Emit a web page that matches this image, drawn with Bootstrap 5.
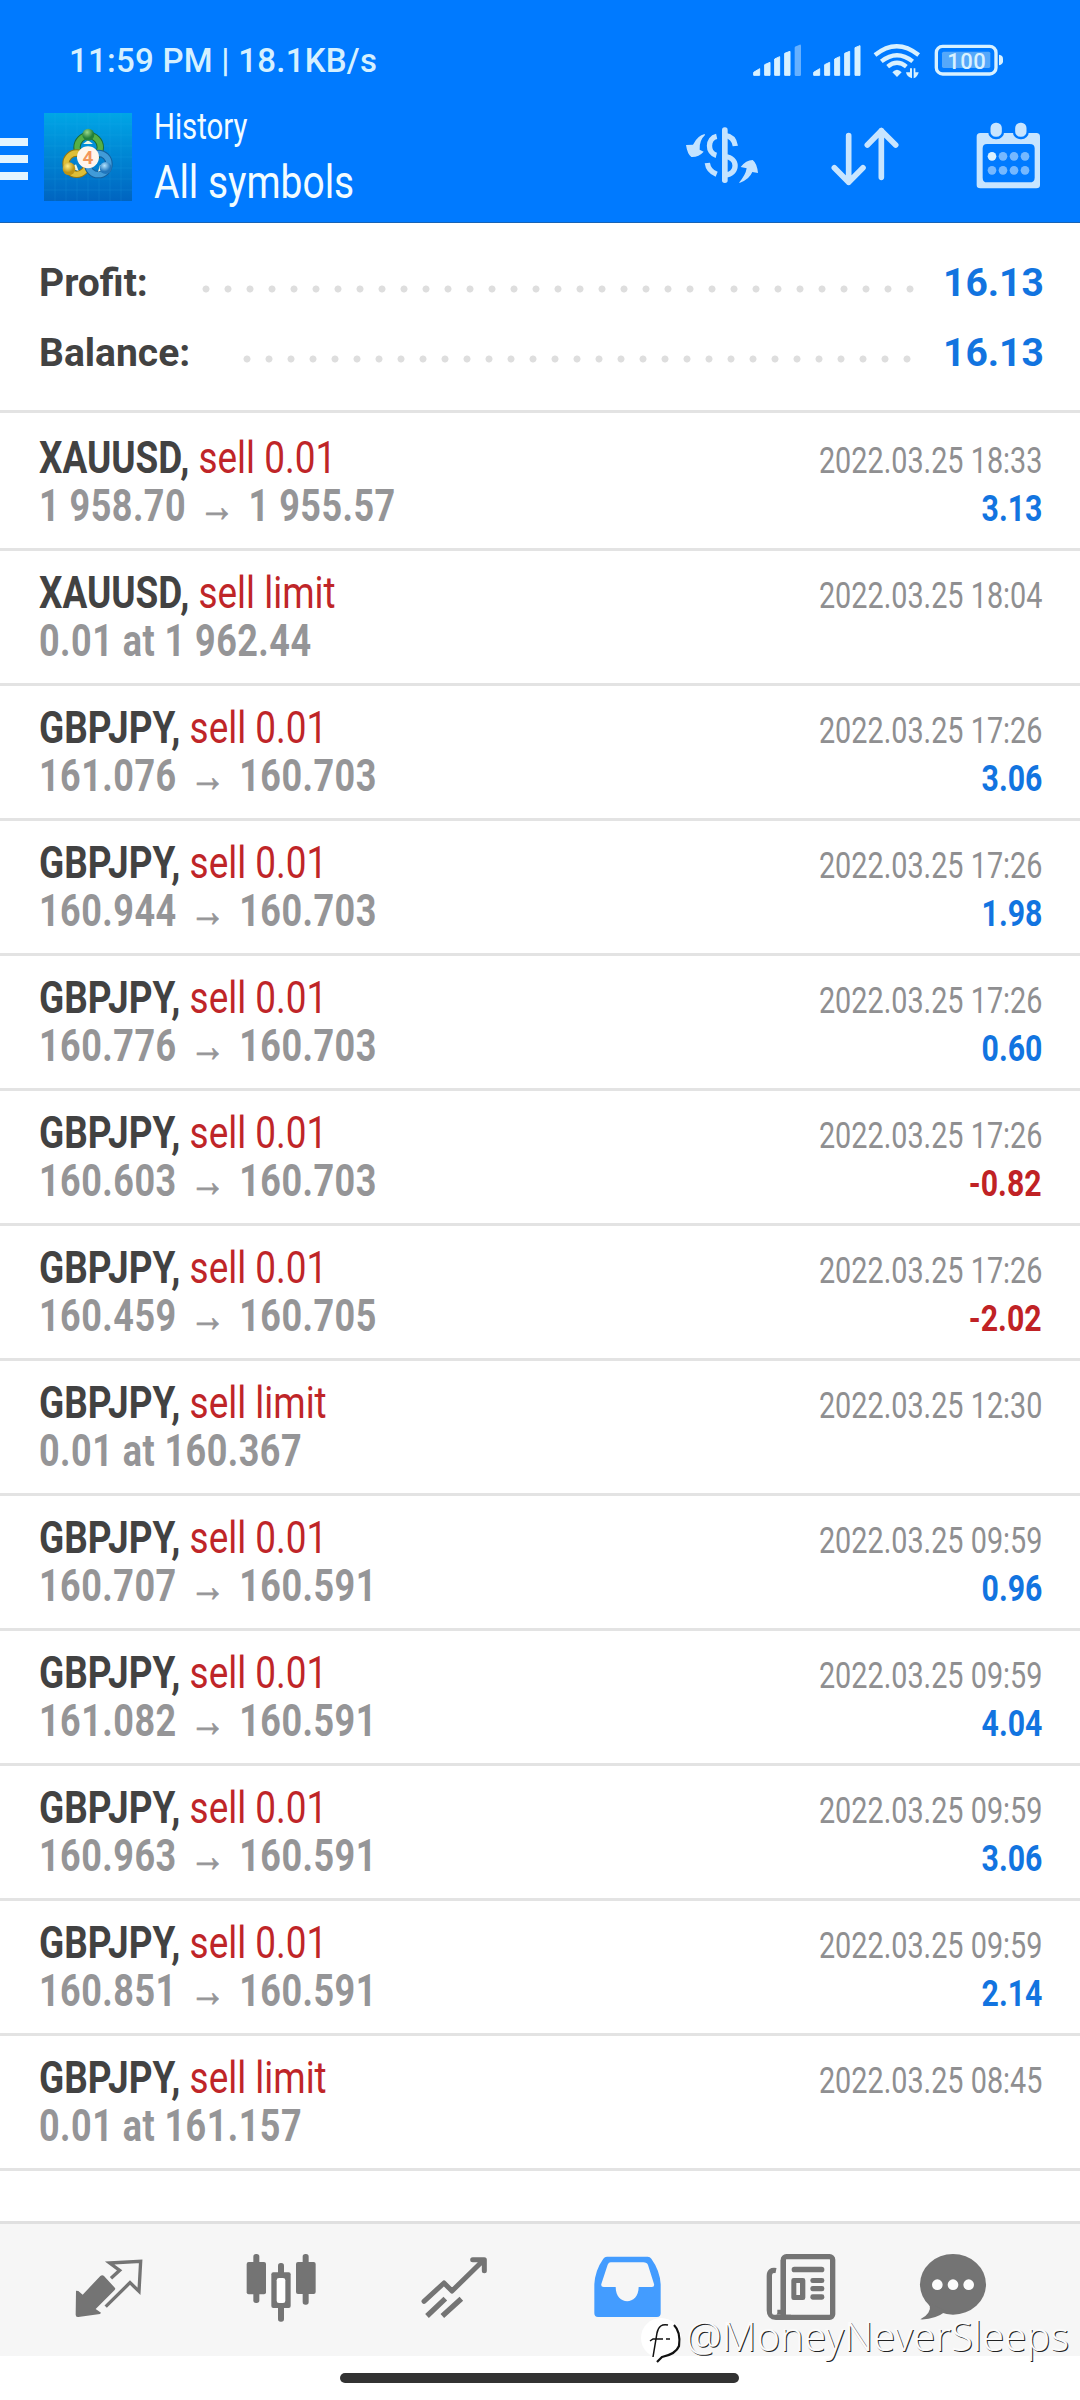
<!DOCTYPE html>
<html lang="en">
<head>
<meta charset="utf-8">
<meta name="viewport" content="width=device-width, initial-scale=1">
<title>History</title>
<link href="https://cdn.jsdelivr.net/npm/bootstrap@5.3.0/dist/css/bootstrap.min.css" rel="stylesheet">
<style>
body{font-family:Roboto,"Liberation Sans",sans-serif;background:#fff;color:#424242;line-height:48px;width:1080px;height:2400px;overflow:hidden}
.top-bar{height:223px;background:#007aff;border-bottom:1px solid #1863b5}
.status-row{height:100px;padding:33px 73px 0 69px}
.clock{font-size:33px;line-height:46px;font-weight:500;color:#d5f0ff;letter-spacing:.25px;margin-top:5px}
.tool-row{height:122px;padding-right:32px}
.burger{width:28px;margin-top:38px}
.burger i{display:block;height:8px;background:#e4f5ff;margin-bottom:9px}
.app-icon{margin:13px 0 0 16px}
.titles{margin-left:22px;color:#f2fcff}
.squeeze{display:inline-block;transform-origin:0 50%;white-space:nowrap}
.t-small{font-size:36px;line-height:48px;transform:scaleX(.815);margin-top:3px;display:block}
.t-big{font-size:46.5px;line-height:56px;transform:scaleX(.837);display:block;margin-top:3px}
.tool-icons{gap:63px;padding-top:20px}
.sums{height:190px;border-bottom:3px solid #e3e3e3;padding:36px 39px 0 39px}
.sum-line{height:70px;font-size:39px;font-weight:700}
.sum-line .amount{color:#1274e0;width:98px;text-align:right}
.leader{height:8px;margin:26px 22px 0 auto;width:726px;background-image:radial-gradient(circle at 11px 4px,#dedede 3.1px,transparent 3.9px);background-size:22px 8px;background-repeat:repeat-x}
.leader-short{width:682px;margin-right:25px}
.deal{height:135px;border-bottom:3px solid #e3e3e3;padding:18px 38px 0 39px}
.deal-first{height:138px;padding-top:21px}
.deal-line{height:48px}
.sym{font-size:44px;transform:scaleX(.839);font-weight:400;color:#bf2528}
.sym b{color:#424242}
.px{font-size:44px;font-weight:700;color:#959597;transform:scaleX(.817);letter-spacing:.6px}
.px em{display:inline-block;font:400 44px/1 "Liberation Sans",sans-serif;margin:0 16px;-webkit-text-stroke:.8px #959597}
.when,.gain{transform-origin:100% 50%;font-size:36px;color:#8f8f91;transform:scaleX(.8)}
.gain{font-weight:700;color:#1274e0;transform:scaleX(.84)}
.gain.neg{color:#c02225}
.tabs{margin-top:50px;height:135px;border-top:3px solid #e0e0e0;background:#f6f6f6;padding:16px 24px 0}
.home-bar{width:399px;height:10px;border-radius:5px;background:#323232;margin:17px 0 0 340px}
.wmark{position:absolute;left:640px;top:2312px;height:56px;width:432px}
.wmark span{font-size:40px;line-height:48px;font-family:"Noto Sans",sans-serif;font-weight:300;color:#fbfbfb;text-shadow:1px 1px 0 #222;width:386px}
</style>
</head>
<body>
<header class="top-bar">
  <div class="status-row d-flex justify-content-between align-items-start">
    <span class="clock">11:59 PM | 18.1KB/s</span>
    <svg width="260" height="50" viewBox="261 36 780 150" fill="#d8f1ff">
      <g stroke="#d8f1ff" stroke-width="3" stroke-linejoin="round">
        <path d="M281 154l18-11v20h-18zM314 131l16-7v39h-16zM344 114l15-7v56h-15zM374 97l16-6v72h-16z"/>
        <path stroke="none" fill="#66b0ff" d="M404 80q0-3 4-4l11-5q4-1 4 4v86q0 4-4 4h-11q-4 0-4-4z"/>
        <path d="M461 154l18-11v20h-18zM494 131l15-7v39h-15zM524 114l15-7v56h-15zM554 97l15-6v72h-15zM585 80l15-6v89h-15z"/>
      </g>
      <g fill="none" stroke="#d8f1ff" stroke-width="13"><path d="M645 102q65-53 131 0"/><path d="M664 121q47-37 94 0"/><path d="M683 137q28-23 56 0"/></g>
      <path d="M697 154q14-15 28 0l-14 14zM750 142h6v30q-16-5-18-18h12zM761 142h5v12h10q-3 14-15 18z"/>
      <rect x="829" y="76" width="179" height="83" rx="19" fill="none" stroke="#d8f1ff" stroke-width="10"/>
      <rect x="846" y="92" width="145" height="49" rx="5" fill="#55a8fa"/>
      <path d="M1017 101q12 2 12 12v8q0 9-12 12z"/>
      <text x="862" y="143" font-size="66" font-weight="500" textLength="115" font-family="Roboto">100</text>
    </svg>
  </div>
  <div class="tool-row d-flex align-items-start">
    <div class="burger"><i></i><i></i><i></i></div>
    <svg class="app-icon" width="88" height="88" viewBox="0 0 264 264">
      <defs>
        <linearGradient id="bg" x2="0" y2="1"><stop stop-color="#00a6e6"/><stop offset="1" stop-color="#0064c0"/></linearGradient>
        <radialGradient id="gn" cx=".4" cy=".3"><stop stop-color="#9ad98a"/><stop offset="1" stop-color="#23803a"/></radialGradient>
        <radialGradient id="yl" cx=".4" cy=".3"><stop stop-color="#fff08a"/><stop offset="1" stop-color="#bd9414"/></radialGradient>
        <radialGradient id="bl" cx=".4" cy=".3"><stop stop-color="#b4e4ff"/><stop offset="1" stop-color="#2076bd"/></radialGradient>
      </defs>
      <rect width="264" height="264" fill="url(#bg)"/>
      <path d="M33 0v264M66 0v264M99 0v264M132 0v264M165 0v264M198 0v264M231 0v264M0 33h264M0 66h264M0 99h264M0 132h264M0 165h264M0 198h264M0 231h264" stroke="#33bbee" stroke-opacity=".22" stroke-width="2"/>
      <g fill="none" stroke-width="22">
        <circle cx="134" cy="103" r="35" stroke="#1b6b35"/><circle cx="134" cy="103" r="35" stroke="#55b045" stroke-width="16"/>
        <circle cx="98" cy="152" r="32" stroke="#97770f"/><circle cx="98" cy="152" r="32" stroke="#dfbf38" stroke-width="16"/>
        <circle cx="163" cy="153" r="32" stroke="#155f9c"/><circle cx="163" cy="153" r="32" stroke="#419bd8" stroke-width="16"/>
      </g>
      <path d="M117 93l15-11 15 11zM80 166l16-12 8 20zM188 166l-20-10-6 20z" fill="#eef6e4"/>
      <circle cx="133" cy="65" r="18" fill="url(#gn)"/><circle cx="75" cy="167" r="19" fill="url(#yl)"/><circle cx="185" cy="165" r="18" fill="url(#bl)"/>
      <circle cx="132" cy="133" r="33" fill="#fff5ec"/>
      <text x="132" y="154" text-anchor="middle" font-family="Roboto" font-size="57" font-weight="700" fill="#f2955a">4</text>
    </svg>
    <div class="titles">
      <div class="squeeze t-small">History</div>
      <div class="squeeze t-big">All symbols</div>
    </div>
    <div class="tool-icons d-flex ms-auto">
      <svg width="80" height="70" viewBox="66 300 240 210" fill="#c4e3ff">
        <path d="M134 342q-21 4-35 32l-21 1q4 27 16 36 22 1 37-16l-12-6q-2-27 16-44zM237 488q20-23 23-43l-18-4q16-21 36-21 13 10 16 39l-17-3q-9 22-37 32z"/>
        <path fill="none" stroke="#c4e3ff" stroke-width="16" d="M170 349c-28 6-29 50-1 57M142 429q3 24 28 34M194 346q28 3 32 32"/>
        <rect x="186" y="322" width="17" height="167" rx="8"/>
        <path fill="none" stroke="#c4e3ff" stroke-width="16" stroke-linecap="round" d="M196 410c39 3 39 52 0 55"/>
      </svg>
      <svg width="80" height="70" viewBox="495 300 240 210" fill="none" stroke="#c8e5ff" stroke-width="17" stroke-linecap="round" stroke-linejoin="round"><path d="M566 347v140M523 443l43 44 43-44M664 472V332M622 375l42-43 43 43"/></svg>
      <svg width="80" height="70" viewBox="924 300 240 210" fill="#c8e5ff">
        <path fill-rule="evenodd" d="M961 339h168q11 0 11 11v145q0 10-11 10H961q-11 0-11-10V350q0-11 11-11zm20 33q-13 0-13 13v88q0 14 13 14h128q15 0 15-14v-88q0-13-15-13z"/>
        <g stroke="#007aff" stroke-width="7"><rect x="988" y="305" width="41" height="49" rx="19"/><rect x="1062" y="305" width="41" height="49" rx="19"/></g>
        <circle cx="996" cy="409" r="13" fill="#dcf2ff"/>
        <g fill="#75b8ff"><circle cx="1029" cy="409" r="13"/><circle cx="1062" cy="409" r="13"/><circle cx="1095" cy="409" r="13"/><circle cx="996" cy="451" r="13"/><circle cx="1029" cy="451" r="13"/><circle cx="1062" cy="451" r="13"/><circle cx="1095" cy="451" r="13"/></g>
      </svg>
    </div>
  </div>
</header>

<section class="sums">
  <div class="sum-line d-flex"><span>Profit:</span><span class="leader"></span><span class="amount">16.13</span></div>
  <div class="sum-line d-flex"><span>Balance:</span><span class="leader leader-short"></span><span class="amount">16.13</span></div>
</section>

<main id="deals"></main>

<nav class="tabs d-flex">
  <svg width="172" height="90" viewBox="-108 0 516 270" fill="#747474">
    <path d="M48 152l7 1 13 11 53-56q6-5 11 0l33 36q2 3-1 6l-57 57 16 11-3 4-65 9q-8 1-8-7z"/>
    <path d="M153 115l26-24-30-22 93-5-5 90-27-26-73 72" fill="none" stroke="#747474" stroke-width="10"/>
  </svg>
  <svg width="172" height="90" viewBox="408 0 516 270" fill="#747474">
    <rect x="580" y="42" width="18" height="147" rx="8"/><rect x="560" y="66" width="58" height="97" rx="6"/>
    <rect x="654" y="69" width="18" height="176" rx="8"/><rect x="634" y="97" width="58" height="107" rx="6"/><rect x="650" y="114" width="26" height="75" rx="7" fill="#fff"/>
    <rect x="728" y="42" width="18" height="152" rx="8"/><rect x="708" y="66" width="59" height="96" rx="6"/>
  </svg>
  <svg width="172" height="90" viewBox="-126 0 516 270" fill="none" stroke="#747474" stroke-width="15" stroke-linejoin="round" stroke-linecap="round"><path d="M42 184l60-55 24 24 95-93M188 59h35v33"/><path stroke-linecap="butt" stroke-width="16" d="M51 228l55-52M97 228l57-52"/></svg>
  <svg width="172" height="90" viewBox="390 0 516 270"><path fill="#439cff" fill-rule="evenodd" d="M591 50h122q7 0 11 6 26 36 28 77v87q0 11-11 11H564q-11 0-11-11v-87q2-42 27-77 4-6 11-6zm11 17q-6 0-9 7l-19 58q-2 9 7 9h36c0 57 69 57 69 0h40q8 0 6-9l-18-57q-3-8-14-8z"/></svg>
  <svg width="172" height="90" viewBox="-114 0 516 270" fill="#747474">
    <rect x="100" y="50" width="148" height="182" rx="9" fill="none" stroke="#747474" stroke-width="16"/>
    <path d="M78 92q-20-4-20 16v103q0 20 20 21h45" fill="none" stroke="#747474" stroke-width="16"/><path d="M92 60h15v165H92zM66 217q1 7 8 7h18v-15H66z"/>
    <path d="M82 100v118q0 6-5 6h-5q-6 0-6-6v-105q0-8 8-13z" fill="#f6f6f6"/>
    <rect x="125" y="80" width="98" height="17" rx="8"/>
    <path fill-rule="evenodd" d="M131 114h28q7 0 7 7v52q0 7-7 7h-28q-7 0-7-7v-52q0-7 7-7zm8 15v36h11v-36z"/>
    <rect x="181" y="114" width="42" height="15" rx="7"/><rect x="181" y="138" width="42" height="16" rx="7"/><rect x="181" y="163" width="42" height="16" rx="7"/>
  </svg>
  <svg width="172" height="90" viewBox="402 0 516 270"><ellipse cx="609" cy="133" rx="99" ry="91" fill="#747474"/><path d="M526 182q23 15 9 36-7 11-24 20 42 2 77-24z" fill="#747474"/><g fill="#fcfcfc"><circle cx="562" cy="134" r="16"/><circle cx="609" cy="134" r="16"/><circle cx="656" cy="134" r="16"/></g></svg>
</nav>
<div class="home-bar"></div>

<div class="wmark d-flex">
  <svg class="flex-shrink-0" width="46" height="56" viewBox="0 0 46 56"><circle cx="21" cy="26" r="20" fill="#fff"/><path d="M28 13q-9-2-11 8l-4 24M10 29l3-2h10M26 27l4 0" fill="none" stroke="#111" stroke-width="1.5"/><path d="M34 13q7 7 5 21-3 8-17 11l-5 5" fill="none" stroke="#111" stroke-width="2.2"/></svg>
  <span class="text-nowrap">@MoneyNeverSleeps</span>
</div>

<script>
const deals = [
  ["XAUUSD","sell 0.01","1 958.70","1 955.57","18:33","3.13"],
  ["XAUUSD","sell limit","0.01 at 1 962.44","","18:04",""],
  ["GBPJPY","sell 0.01","161.076","160.703","17:26","3.06"],
  ["GBPJPY","sell 0.01","160.944","160.703","17:26","1.98"],
  ["GBPJPY","sell 0.01","160.776","160.703","17:26","0.60"],
  ["GBPJPY","sell 0.01","160.603","160.703","17:26","-0.82"],
  ["GBPJPY","sell 0.01","160.459","160.705","17:26","-2.02"],
  ["GBPJPY","sell limit","0.01 at 160.367","","12:30",""],
  ["GBPJPY","sell 0.01","160.707","160.591","09:59","0.96"],
  ["GBPJPY","sell 0.01","161.082","160.591","09:59","4.04"],
  ["GBPJPY","sell 0.01","160.963","160.591","09:59","3.06"],
  ["GBPJPY","sell 0.01","160.851","160.591","09:59","2.14"],
  ["GBPJPY","sell limit","0.01 at 161.157","","08:45",""]
];
document.getElementById("deals").innerHTML = deals.map(([s, side, a, b, t, g], i) => `
  <div class="deal ${i ? "" : "deal-first"}">
    <div class="deal-line d-flex justify-content-between align-items-baseline"><span class="squeeze sym"><b>${s},</b> ${side}</span><span class="squeeze when">2022.03.25 ${t}</span></div>
    <div class="deal-line d-flex justify-content-between align-items-baseline"><span class="squeeze px">${a}${b ? `<em>→</em>${b}` : ""}</span><span class="squeeze gain ${g[0] === "-" ? "neg" : ""}">${g}</span></div>
  </div>`).join("");
</script>
<script src="https://cdn.jsdelivr.net/npm/bootstrap@5.3.0/dist/js/bootstrap.bundle.min.js"></script>
</body>
</html>
